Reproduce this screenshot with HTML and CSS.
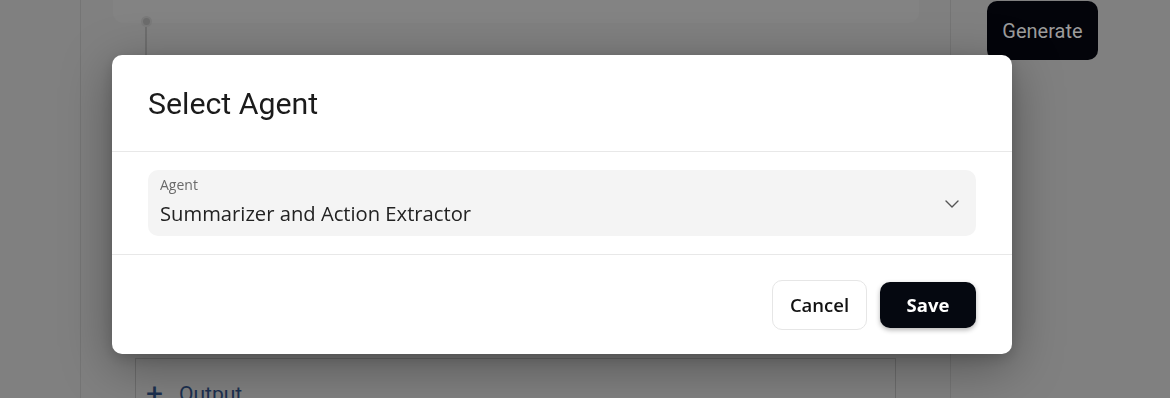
FILE: index.html
```html
<!DOCTYPE html>
<html>
<head>
<meta charset="utf-8">
<link rel="stylesheet" href="styles.css">
</head>
<body>
<div class="page">
  <div class="rail"></div>
  <div class="main">
    <div class="topbar"></div>
    <div class="connector"><span class="dot"></span><span class="stem"></span></div>
    <div class="output-card">
      <div class="add-output"><span class="plus">+</span><span>Output</span></div>
    </div>
  </div>
  <div class="side">
    <button class="generate">Generate</button>
  </div>
</div>

<div class="modal">
  <div class="modal-header"><h2>Select Agent</h2></div>
  <div class="modal-body">
    <div class="select">
      <div class="select-text">
        <span class="select-label">Agent</span>
        <span class="select-value">Summarizer and Action Extractor</span>
      </div>
      <svg class="chevron" width="14" height="8" viewBox="0 0 14 8"><path d="M1 1l6 6 6-6" fill="none" stroke="#555" stroke-width="1.4" stroke-linecap="round" stroke-linejoin="round"/></svg>
    </div>
  </div>
  <div class="modal-footer">
    <button class="btn btn-cancel">Cancel</button>
    <button class="btn btn-save">Save</button>
  </div>
</div>
</body>
</html>
```

FILE: styles.css
```css
* { box-sizing: border-box; }
html, body { margin: 0; padding: 0; }
body {
  width: 1170px;
  height: 398px;
  overflow: hidden;
  background: #808080;
  font-family: "Open Sans", "Noto Sans", sans-serif;
}
.page {
  display: flex;
  height: 398px;
}
.rail {
  width: 81px;
  border-right: 1px solid #757575;
}
.main {
  width: 870px;
  border-right: 1px solid #757575;
  padding-left: 32px;
  display: flex;
  flex-direction: column;
}
.topbar {
  width: 806px;
  height: 23px;
  background: #838383;
  border-radius: 0 0 10px 10px;
}
.connector {
  display: flex;
  flex-direction: column;
  align-items: center;
  width: 10px;
  margin-left: 28px;
  margin-top: -7px;
}
.dot {
  width: 11px;
  height: 11px;
  border-radius: 50%;
  background: #6c6c6c;
  border: 2px solid #7a7a7a;
}
.stem {
  width: 2px;
  height: 40px;
  background: #6e6e6e;
}
.output-card {
  margin-top: auto;
  margin-left: 22px;
  width: 761px;
  height: 40px;
  border: 1px solid #6c6c6c;
  border-bottom: none;
  padding: 23px 0 0 10px;
}
.add-output {
  display: flex;
  align-items: center;
  gap: 16px;
  font-family: Roboto, sans-serif;
  font-size: 21px;
  color: #1c3050;
  line-height: 24px;
}
.plus {
  font-size: 30px;
  font-weight: 400;
}
.side {
  flex: 1;
  padding: 1px 0 0 36px;
}
.generate {
  width: 111px;
  height: 59px;
  border: none;
  border-radius: 10px;
  background: #03040a;
  color: #9c9c9c;
  font-family: Roboto, sans-serif;
  font-size: 20px;
  padding: 0;
}

.modal {
  position: fixed;
  left: 112px;
  top: 55px;
  width: 900px;
  height: 299px;
  background: #fff;
  border-radius: 10px;
  box-shadow: 0 12px 50px rgba(0, 0, 0, 0.35), 0 4px 14px rgba(0, 0, 0, 0.15);
  display: flex;
  flex-direction: column;
}
.modal-header {
  height: 97px;
  padding: 0 36px;
  display: flex;
  align-items: center;
  border-bottom: 1px solid #e8e8e8;
}
.modal-header h2 {
  margin: 0;
  font-family: Roboto, sans-serif;
  font-weight: 400;
  font-size: 30.3px;
  color: #1b1b1b;
}
.modal-body {
  padding: 18px 36px;
  border-bottom: 1px solid #e8e8e8;
}
.select {
  height: 66px;
  background: #f4f4f4;
  border-radius: 10px;
  padding: 0 17px 0 12px;
  display: flex;
  align-items: center;
  justify-content: space-between;
}
.select-text {
  display: flex;
  flex-direction: column;
  margin-top: -2px;
}
.select-label {
  font-size: 14px;
  color: #6a6a6a;
  line-height: 16px;
}
.select-value {
  font-size: 20.2px;
  color: #222;
  line-height: 28px;
  margin-top: 6px;
}
.chevron {
  margin-top: 2px;
}
.modal-footer {
  flex: 1;
  padding: 0 36px;
  display: flex;
  justify-content: flex-end;
  align-items: center;
  gap: 13px;
}
.btn {
  font-family: "Open Sans", "Noto Sans", sans-serif;
  font-size: 18.5px;
  font-weight: 600;
  border-radius: 10px;
  cursor: pointer;
}
.btn-cancel {
  width: 95px;
  height: 50px;
  background: #fff;
  color: #111;
  border: 1px solid #e6e6e6;
}
.btn-save {
  width: 96px;
  height: 46px;
  background: #050810;
  color: #fff;
  border: none;
  font-weight: 700;
  box-shadow: 0 2px 5px rgba(0, 0, 0, 0.3);
}
```
